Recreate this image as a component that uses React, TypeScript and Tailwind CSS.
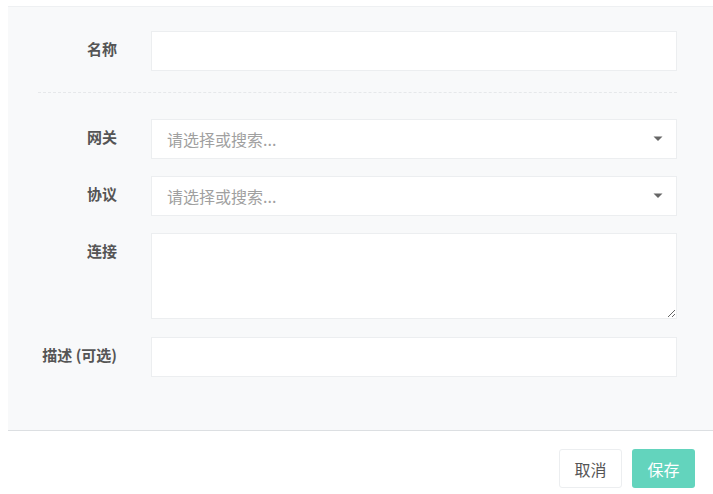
import React from 'react';

const font = { fontFamily: '"Noto Sans CJK SC", "Noto Sans", sans-serif' };

const Label: React.FC<{ text: string }> = ({ text }) => (
  <div className="w-[109px] shrink-0 h-[36px] flex items-center justify-end text-[15px] font-bold text-[#555]">{text}</div>
);

const Caret = () => (
  <svg width="10" height="6" viewBox="0 0 10 6" className="absolute right-[13px] top-1/2 -translate-y-1/2">
    <path d="M0.5 0.5 L9.5 0.5 L5 5 Z" fill="#666" />
  </svg>
);

const SelectBox: React.FC = () => (
  <div className="relative ml-[34px] w-[526px] h-10 bg-white border border-[#eceef0] flex items-center pl-[15px] text-[16px] text-[#a0a0a0]">
    请选择或搜索...
    <Caret />
  </div>
);

export default function App() {
  return (
    <div className="w-[713px] h-[494px] bg-white overflow-hidden" style={font}>
      <div className="ml-2 mt-[6px] h-[425px] bg-[#f8f9fa] border-t border-[#eef0f2] border-b border-b-[#dcdfe2] pt-[24px]">
        <div className="flex items-start">
          <Label text="名称" />
          <input className="ml-[34px] w-[526px] h-10 bg-white border border-[#eceef0] outline-none px-3" />
        </div>

        <div className="ml-[30px] w-[639px] mt-[21px] border-t border-dashed border-[#e6e8ea]" />

        <div className="flex items-start mt-[26px]">
          <Label text="网关" />
          <SelectBox />
        </div>

        <div className="flex items-start mt-[17px]">
          <Label text="协议" />
          <SelectBox />
        </div>

        <div className="flex items-start mt-[17px]">
          <Label text="连接" />
          <textarea className="ml-[34px] w-[526px] h-[86px] bg-white border border-[#eceef0] outline-none px-3 py-2 resize-y block" />
        </div>

        <div className="flex items-start mt-[18px]">
          <Label text="描述 (可选)" />
          <input className="ml-[34px] w-[526px] h-10 bg-white border border-[#eceef0] outline-none px-3" />
        </div>
      </div>

      <div className="flex justify-end gap-[10px] pr-[18px] mt-[18px]">
        <button className="w-[63px] h-[39px] bg-white border border-[#eceef0] rounded-[3px] text-[16px] text-[#555]">取消</button>
        <button className="w-[63px] h-[39px] bg-[#63d4bd] rounded-[3px] text-[16px] text-white">保存</button>
      </div>
    </div>
  );
}
